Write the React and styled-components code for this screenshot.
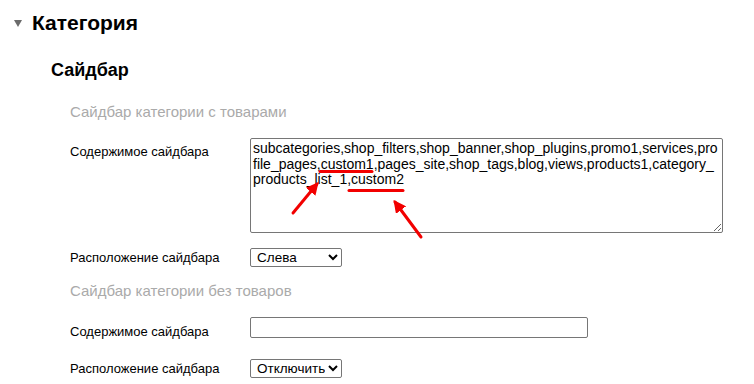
import React from "react";
import styled, { createGlobalStyle } from "styled-components";

const GlobalStyle = createGlobalStyle`
  html, body {
    margin: 0;
    padding: 0;
    background: #fff;
  }
  body {
    font-family: "Liberation Sans", Arial, sans-serif;
    color: #000;
  }
`;

const Page = styled.div`
  width: 754px;
  height: 384px;
  overflow: hidden;
`;

const Header = styled.div`
  display: flex;
  align-items: center;
  gap: 10px;
  padding: 11px 0 0 14px;
`;

const Caret = styled.span`
  width: 0;
  height: 0;
  margin-top: 1px;
  border-left: 4px solid transparent;
  border-right: 4px solid transparent;
  border-top: 7px solid #6b6b6b;
`;

const Title = styled.h2`
  margin: 0;
  font-size: 21px;
  line-height: 24px;
  font-weight: bold;
`;

const Section = styled.div`
  padding: 24px 0 0 51px;
`;

const SectionTitle = styled.h3`
  margin: 0;
  font-size: 18px;
  line-height: 22px;
  font-weight: bold;
`;

const Group = styled.div`
  padding-left: 19px;
`;

const GroupTitle = styled.h4`
  margin: ${({ $top }) => $top}px 0 0;
  font-size: 15px;
  line-height: 18px;
  font-weight: normal;
  color: #aaa;
`;

const Row = styled.div`
  display: grid;
  grid-template-columns: 180px auto;
  align-items: start;
  margin-top: ${({ $top }) => $top}px;
`;

const Label = styled.label`
  font-size: 13px;
  line-height: 15px;
  padding-top: ${({ $pad }) => $pad}px;
`;

const AreaWrap = styled.div`
  position: relative;
  width: 473px;
  height: 95px;
`;

const Area = styled.textarea`
  box-sizing: border-box;
  width: 473px;
  height: 95px;
  margin: 0;
  padding: 2px 2px;
  border: 1px solid #767676;
  border-radius: 2px;
  font-family: "Liberation Sans", Arial, sans-serif;
  font-size: 14px;
  line-height: 15.5px;
  color: #000;
  resize: both;
  overflow: hidden;
`;

const Marks = styled.svg`
  position: absolute;
  left: 0;
  top: 0;
  overflow: visible;
  pointer-events: none;
`;

const Select = styled.select`
  box-sizing: border-box;
  width: 92px;
  height: 19px;
  margin: 0;
  padding: 0 0 0 2px;
  border: 1px solid #767676;
  border-radius: 2px;
  font-family: "Liberation Sans", Arial, sans-serif;
  font-size: 13.5px;
  color: #000;
  background: #fff;
`;

const Input = styled.input`
  box-sizing: border-box;
  width: 338px;
  height: 21px;
  margin: 0;
  padding: 1px 2px;
  border: 1px solid #767676;
  border-radius: 2px;
  font-family: "Liberation Sans", Arial, sans-serif;
  font-size: 13.33px;
`;

const content =
  "subcategories,shop_filters,shop_banner,shop_plugins,promo1,services,profile_pages,custom1,pages_site,shop_tags,blog,views,products1,category_products_list_1,custom2";

const Annotations = () => (
  <Marks width="473" height="95">
    <defs>
      <marker
        id="head"
        viewBox="0 0 10 10"
        refX="8"
        refY="5"
        markerWidth="4.2"
        markerHeight="4.2"
        orient="auto"
      >
        <path d="M0 0 L10 5 L0 10 Z" fill="#f20000" />
      </marker>
    </defs>
    <g stroke="#f20000" strokeWidth="3" strokeLinecap="round" fill="none">
      <line x1="70" y1="33.5" x2="122" y2="33.5" />
      <line x1="99" y1="52.5" x2="153" y2="52.5" />
      <line x1="43" y1="75" x2="67" y2="46" markerEnd="url(#head)" />
      <line x1="171" y1="99" x2="145" y2="64" markerEnd="url(#head)" />
    </g>
  </Marks>
);

export default function App() {
  return (
    <Page>
      <GlobalStyle />
      <Header>
        <Caret />
        <Title>Категория</Title>
      </Header>
      <Section>
        <SectionTitle>Сайдбар</SectionTitle>
        <Group>
          <GroupTitle $top={22}>Сайдбар категории с товарами</GroupTitle>
          <Row $top={17}>
            <Label $pad={6}>Содержимое сайдбара</Label>
            <AreaWrap>
              <Area defaultValue={content} spellCheck={false} />
              <Annotations />
            </AreaWrap>
          </Row>
          <Row $top={15}>
            <Label $pad={2}>Расположение сайдбара</Label>
            <Select defaultValue="left">
              <option value="left">Слева</option>
              <option value="right">Справа</option>
              <option value="off">Отключить</option>
            </Select>
          </Row>
          <GroupTitle $top={15}>Сайдбар категории без товаров</GroupTitle>
          <Row $top={17}>
            <Label $pad={7}>Содержимое сайдбара</Label>
            <Input type="text" />
          </Row>
          <Row $top={20}>
            <Label $pad={2}>Расположение сайдбара</Label>
            <Select defaultValue="off">
              <option value="left">Слева</option>
              <option value="right">Справа</option>
              <option value="off">Отключить</option>
            </Select>
          </Row>
        </Group>
      </Section>
    </Page>
  );
}
